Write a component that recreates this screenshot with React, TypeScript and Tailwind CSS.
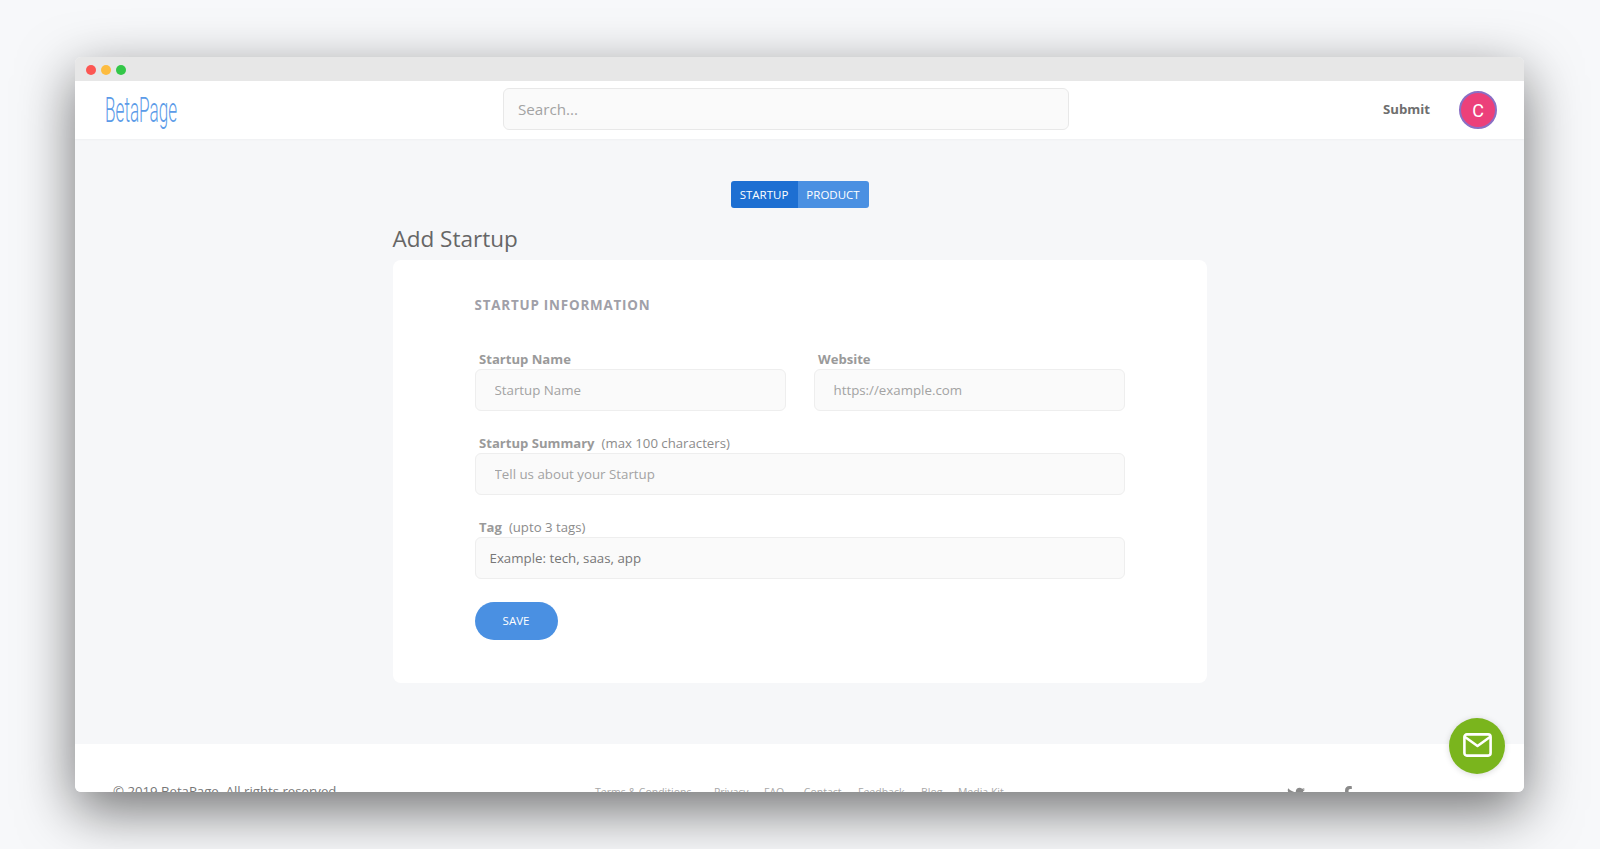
import { FaTwitter, FaFacebookF } from "react-icons/fa";

const inputCls =
  "block w-full h-[42px] rounded-[6px] border border-[#eeeeee] bg-[#fafafa] pl-[19px] pr-3 text-[13.3px] text-[#6b6b6b] outline-none placeholder:text-[#a3a3a3]";

function Label({ title, note }: { title: string; note?: string }) {
  return (
    <div className="h-[18px] pl-[4.5px] text-[13.2px] leading-[17px] text-[#8c8c8c] whitespace-nowrap">
      <span className="text-[13.1px] font-bold text-[#9a9a9a]">{title}</span>
      {note && <span className="ml-[7px]">{note}</span>}
    </div>
  );
}

export default function App() {
  return (
    <div className="h-[849px] overflow-hidden bg-[#f7f8fa] pt-[57px] pl-[75px] font-['Open_Sans',sans-serif]">
      <div className="relative flex h-[735px] w-[1449px] flex-col overflow-hidden rounded-[6px] bg-[#f6f7f9] shadow-[0_18px_55px_rgba(0,0,0,0.55)]">
        {/* title bar */}
        <div className="flex h-[24px] shrink-0 items-center gap-[5px] bg-[#e7e7e7] pl-[10.5px] pt-[1px]">
          <span className="h-[10px] w-[10px] rounded-full bg-[#fc5753]" />
          <span className="h-[10px] w-[10px] rounded-full bg-[#fdbc40]" />
          <span className="h-[10px] w-[10px] rounded-full bg-[#33c748]" />
        </div>

        {/* header */}
        <header className="flex h-[58px] shrink-0 items-center bg-white pl-[30px] pr-[27px] shadow-[0_1px_2px_rgba(0,0,0,0.03)]">
          <div className="w-[398px]">
            <div className="mt-[2px] h-[40px] w-[72px] origin-left scale-x-[0.49] font-['Roboto',sans-serif] text-[35px] font-light leading-[40px] text-[#5b9be8] whitespace-nowrap">
              BetaPage
            </div>
          </div>
          <input
            placeholder="Search..."
            className="mb-[3px] h-[42px] w-[566px] rounded-[6px] border border-[#e8e8e8] bg-[#fafafa] px-[14px] text-[15.2px] outline-none placeholder:text-[#a3a3a3]"
          />
          <span className="ml-auto text-[13.2px] font-bold text-[#6e6e6e]">Submit</span>
          <div className="ml-[29px] flex h-[38px] w-[38px] items-center justify-center rounded-full border-2 border-[#8a6fc4] bg-[#ec407a] font-['Roboto',sans-serif] text-[18px] text-white">
            C
          </div>
        </header>

        {/* main */}
        <main className="flex h-[605px] shrink-0 flex-col items-center pt-[42px]">
          <div className="flex h-[27px] overflow-hidden rounded-[3px] text-[11.5px] text-white">
            <span className="flex w-[67px] items-center justify-center bg-[#1d6fd2]">STARTUP</span>
            <span className="flex w-[71px] items-center justify-center bg-[#4a90e2]">PRODUCT</span>
          </div>
          <div className="w-[814px]">
            <h1 className="mt-[12px] h-[40px] text-[22.5px] leading-[38px] text-[#666666]">Add Startup</h1>
            <div className="h-[423px] rounded-[8px] bg-white px-[82px] pt-[35px]">
              <h2 className="text-[13.4px] font-bold leading-[20px] tracking-[0.8px] text-[#a0a0a8]">STARTUP INFORMATION</h2>
              <div className="mt-[36px] grid grid-cols-2 gap-x-[28px]">
                <div>
                  <Label title="Startup Name" />
                  <input placeholder="Startup Name" className={inputCls} />
                </div>
                <div>
                  <Label title="Website" />
                  <input placeholder="https://example.com" className={inputCls} />
                </div>
              </div>
              <div className="mt-[24px]">
                <Label title="Startup Summary" note="(max 100 characters)" />
                <input placeholder="Tell us about your Startup" className={inputCls} />
              </div>
              <div className="mt-[24px]">
                <Label title="Tag" note="(upto 3 tags)" />
                <input
                  placeholder="Example: tech, saas, app"
                  className="block h-[42px] w-full rounded-[6px] border border-[#eeeeee] bg-[#fafafa] pl-[14px] pb-[1px] text-[13.3px] outline-none placeholder:text-[#777777]"
                />
              </div>
              <button className="mt-[23px] block h-[38px] w-[83px] rounded-full bg-[#4a90e2] text-[11.5px] text-white">SAVE</button>
            </div>
          </div>
        </main>

        {/* footer */}
        <footer className="flex h-[48px] shrink-0 bg-white pl-[38px] pt-[37px]">
          <span className="w-[482px] text-[13.2px] leading-[20px] text-[#777777] whitespace-nowrap">© 2019 BetaPage. All rights reserved.</span>
          <nav className="mt-[2px] flex w-[692px] gap-[15.5px] text-[10.5px] leading-[18px] text-[#a8a8a8] whitespace-nowrap">
            <span>Terms &amp; Conditions</span>
            <span className="ml-[7px]">Privacy</span>
            <span>FAQ</span>
            <span className="ml-[4px]">Contact</span>
            <span className="ml-[1px]">Feedback</span>
            <span className="ml-[1px]">Blog</span>
            <span>Media Kit</span>
          </nav>
          <div className="mt-[5px] flex gap-[33px] text-[18px] text-[#8a8a8a]">
            <FaTwitter />
            <FaFacebookF />
          </div>
        </footer>

        {/* floating mail button */}
        <button className="absolute right-[19px] bottom-[18px] flex h-[56px] w-[56px] items-center justify-center rounded-full bg-[#7ab51d] pb-[2px] shadow-[0_1px_6px_rgba(0,0,0,0.15)]">
          <svg width="29" height="24" viewBox="0 0 29 24" fill="none" stroke="white" strokeWidth="2.6" strokeLinejoin="round" strokeLinecap="round">
            <rect x="1.4" y="1.4" width="26.2" height="21.2" rx="2.5" />
            <path d="M2 4 L14.5 13 L27 4" />
          </svg>
        </button>
      </div>
    </div>
  );
}
